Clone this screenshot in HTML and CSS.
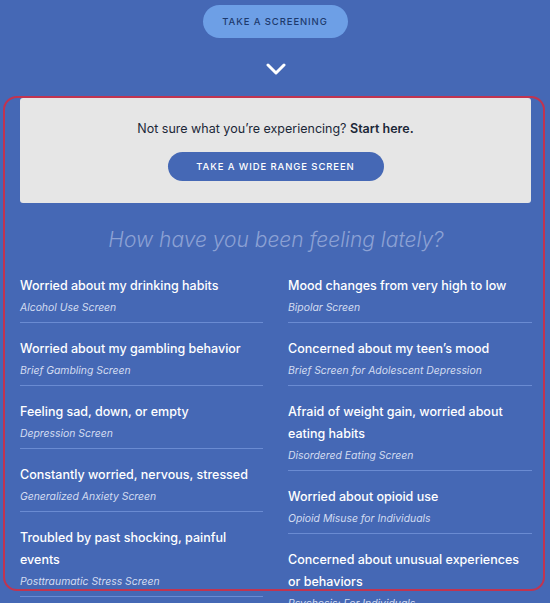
FILE: index.html
```html
<!DOCTYPE html>
<html lang="en">
<head>
<meta charset="utf-8">
<title>Screenings</title>
<link rel="stylesheet" href="styles.css">
</head>
<body>
<div class="page">
  <div class="top">
    <a class="btn-light" href="#">TAKE A SCREENING</a>
    <svg class="chevron" width="20" height="12" viewBox="0 0 20 12"><path d="M2 2 L10 10 L18 2" fill="none" stroke="#ffffff" stroke-width="3" stroke-linecap="round" stroke-linejoin="round"/></svg>
  </div>

  <section class="panel">
    <div class="grey">
      <p class="lead">Not sure what you’re experiencing? <strong>Start here.</strong></p>
      <a class="btn-blue" href="#">TAKE A WIDE RANGE SCREEN</a>
    </div>

    <h2 class="heading">How have you been feeling lately?</h2>

    <div class="cols">
      <div class="col">
        <a class="item" href="#"><span class="title">Worried about my drinking habits</span><span class="sub">Alcohol Use Screen</span></a>
        <a class="item" href="#"><span class="title">Worried about my gambling behavior</span><span class="sub">Brief Gambling Screen</span></a>
        <a class="item" href="#"><span class="title">Feeling sad, down, or empty</span><span class="sub">Depression Screen</span></a>
        <a class="item" href="#"><span class="title">Constantly worried, nervous, stressed</span><span class="sub">Generalized Anxiety Screen</span></a>
        <a class="item" href="#"><span class="title">Troubled by past shocking, painful events</span><span class="sub">Posttraumatic Stress Screen</span></a>
      </div>
      <div class="col">
        <a class="item" href="#"><span class="title">Mood changes from very high to low</span><span class="sub">Bipolar Screen</span></a>
        <a class="item" href="#"><span class="title">Concerned about my teen’s mood</span><span class="sub">Brief Screen for Adolescent Depression</span></a>
        <a class="item" href="#"><span class="title">Afraid of weight gain, worried about eating habits</span><span class="sub">Disordered Eating Screen</span></a>
        <a class="item" href="#"><span class="title">Worried about opioid use</span><span class="sub">Opioid Misuse for Individuals</span></a>
        <a class="item" href="#"><span class="title">Concerned about unusual experiences or behaviors</span><span class="sub">Psychosis: For Individuals</span></a>
      </div>
    </div>
  </section>
  <div class="highlight"></div>
</div>
</body>
</html>
```

FILE: styles.css
```css
* { box-sizing: border-box; }
html, body {
  margin: 0;
  padding: 0;
  background: #4568b5;
  height: 100%;
  overflow: hidden;
}
body {
  font-family: "Inter", "Open Sans", sans-serif;
  color: #ffffff;
}
.page {
  position: relative;
  width: 550px;
  height: 603px;
}
.top {
  display: flex;
  flex-direction: column;
  align-items: center;
  padding-top: 5px;
}
.btn-light {
  display: flex;
  align-items: center;
  justify-content: center;
  width: 145px;
  height: 33px;
  border-radius: 17px;
  background: #6d9fe6;
  color: #1d3a6d;
  font-size: 9.5px;
  font-weight: 500;
  letter-spacing: 0.9px;
  text-decoration: none;
}
.chevron {
  display: block;
  margin-top: 25px;
  margin-left: 1px;
}
.panel {
  margin-top: 23px;
  padding: 0 18px 0 20px;
}
.grey {
  background: #e6e6e6;
  border-radius: 3px;
  height: 105px;
  margin-right: 1px;
  padding-top: 20px;
  display: flex;
  flex-direction: column;
  align-items: center;
}
.lead {
  margin: 0;
  font-size: 12.5px;
  line-height: 22px;
  color: #1c2838;
}
.lead strong { font-weight: 600; }
.btn-blue {
  display: flex;
  align-items: center;
  justify-content: center;
  margin-top: 12px;
  width: 216px;
  height: 29px;
  border-radius: 15px;
  background: #4568b5;
  color: #ffffff;
  font-size: 9.5px;
  font-weight: 500;
  letter-spacing: 0.9px;
  text-decoration: none;
}
.heading {
  margin: 25px 0 0;
  text-align: center;
  font-size: 21px;
  line-height: 24px;
  font-weight: 300;
  font-style: italic;
  color: #8ca1d4;
}
.cols {
  display: grid;
  grid-template-columns: 243px 244px;
  column-gap: 25px;
  margin-top: 8px;
}
.col {
  display: flex;
  flex-direction: column;
}
.item {
  display: flex;
  flex-direction: column;
  padding: 15px 0 3px;
  border-bottom: 1px solid #6a8bd2;
  text-decoration: none;
  color: #ffffff;
}
.title {
  font-size: 12.5px;
  line-height: 22px;
  font-weight: 500;
}
.sub {
  font-size: 10.4px;
  line-height: 22px;
  font-style: italic;
  color: #d3dcf1;
}
.highlight {
  position: absolute;
  left: 3px;
  top: 96px;
  width: 542px;
  height: 495px;
  border: 2px solid #c13450;
  border-radius: 14px;
  pointer-events: none;
}
```
